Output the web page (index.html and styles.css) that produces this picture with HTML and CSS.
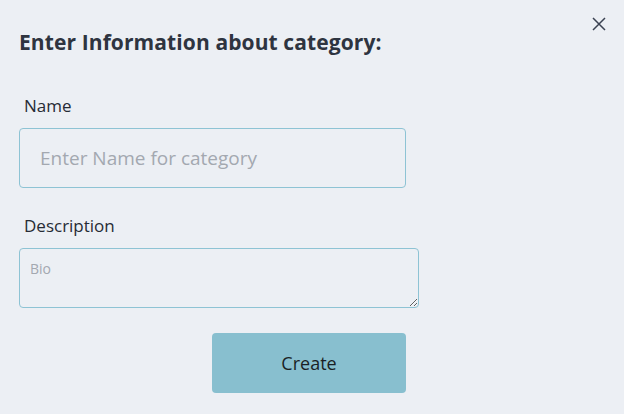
FILE: index.html
```html
<!DOCTYPE html>
<html>
<head>
<meta charset="utf-8">
<link rel="stylesheet" href="styles.css">
</head>
<body>
<div class="modal">
  <button class="close" aria-label="Close">
    <svg width="14" height="14" viewBox="0 0 14 14"><path d="M1 1L13 13M13 1L1 13" stroke="#3b4252" stroke-width="1.5" fill="none"/></svg>
  </button>
  <h2 class="title">Enter Information about category:</h2>
  <form class="form">
    <label class="label">Name</label>
    <input class="input" type="text" placeholder="Enter Name for category">
    <label class="label label-desc">Description</label>
    <textarea class="textarea" placeholder="Bio"></textarea>
    <div class="actions">
      <button type="button" class="create">Create</button>
    </div>
  </form>
</div>
</body>
</html>
```
FILE: styles.css
```css
* { box-sizing: border-box; }
html, body {
  margin: 0;
  background: #eceff4;
  font-family: "Open Sans", "Noto Sans", sans-serif;
  color: #2e3440;
}
.modal {
  position: relative;
  width: 624px;
  height: 414px;
  padding: 27px 19px 0 19px;
}
.close {
  position: absolute;
  top: 17px;
  right: 18px;
  width: 14px;
  height: 14px;
  padding: 0;
  border: 0;
  background: none;
  display: flex;
}
.title {
  margin: 0;
  font-size: 21px;
  font-weight: 700;
  line-height: 30px;
  letter-spacing: 0.1px;
}
.form {
  width: 400px;
  display: flex;
  flex-direction: column;
  margin-top: 38px;
}
.label {
  font-size: 17px;
  line-height: 22px;
  margin: 0 0 11px 5px;
  color: #262b35;
}
.label-desc { margin-top: 27px; }
.input {
  width: 387px;
  height: 60px;
  border: 1px solid #8ec3d4;
  border-radius: 4px;
  background: #eceff4;
  padding: 0 20px;
  font-family: inherit;
  font-size: 19px;
  color: #2e3440;
  outline: none;
}
.input::placeholder { color: #a3a8b0; }
.textarea {
  width: 400px;
  height: 60px;
  border: 1px solid #8ec3d4;
  border-radius: 4px;
  background: #eceff4;
  padding: 10px 10px;
  font-family: inherit;
  font-size: 14px;
  color: #2e3440;
  outline: none;
  resize: both;
}
.textarea::placeholder { color: #a3a8b0; }
.actions {
  width: 387px;
  display: flex;
  justify-content: flex-end;
  margin-top: 25px;
}
.create {
  width: 194px;
  height: 60px;
  border: 0;
  border-radius: 4px;
  background: #88bfcf;
  font-family: inherit;
  font-size: 18px;
  color: #1b1f25;
}
```
